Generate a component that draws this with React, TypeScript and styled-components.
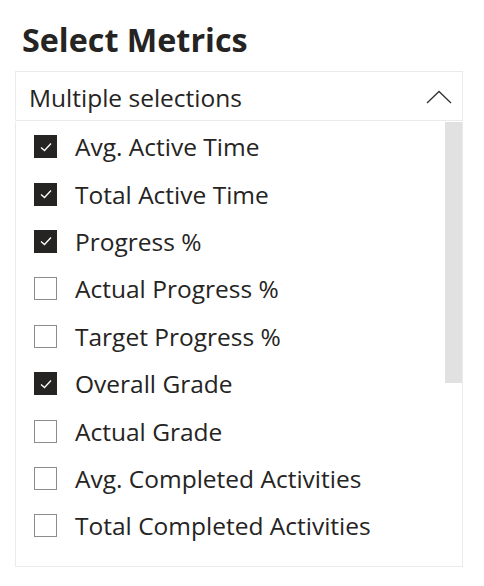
import React, { useState } from 'react';
import styled, { createGlobalStyle } from 'styled-components';

const GlobalStyle = createGlobalStyle`
  html, body {
    margin: 0;
    padding: 0;
    background: #ffffff;
  }
  body {
    font-family: "Open Sans", "DejaVu Sans", sans-serif;
    color: #252423;
  }
`;

const Wrapper = styled.div`
  width: 484px;
  height: 586px;
  padding: 0 21px 0 15px;
  box-sizing: border-box;
  display: flex;
  flex-direction: column;
`;

const Title = styled.h2`
  margin: 0 0 0 7px;
  height: 71px;
  padding-top: 19px;
  box-sizing: border-box;
  font-size: 32.3px;
  line-height: 40px;
  font-weight: 700;
  color: #252423;
`;

const Header = styled.div`
  height: 50px;
  border: 1px solid #ebebeb;
  box-sizing: border-box;
  display: flex;
  align-items: center;
  justify-content: space-between;
  padding: 2px 10px 0 13px;
`;

const HeaderText = styled.span`
  font-size: 24.5px;
  color: #252423;
`;

const Panel = styled.div`
  margin-top: 1px;
  height: 445px;
  border: 1px solid #ebebeb;
  border-top: none;
  box-sizing: border-box;
  display: flex;
`;

const List = styled.ul`
  flex: 1;
  margin: 0;
  padding: 1px 0 0 18px;
  list-style: none;
`;

const Row = styled.li`
  height: 47.4px;
  display: flex;
  align-items: center;
  gap: 18px;
  cursor: pointer;
  font-size: 24.5px;
  white-space: nowrap;
`;

const Box = styled.span<{ $checked: boolean }>`
  width: 23px;
  height: 23px;
  box-sizing: border-box;
  flex: none;
  display: flex;
  align-items: center;
  justify-content: center;
  background: ${({ $checked }) => ($checked ? '#252423' : '#ffffff')};
  border: 1.5px solid ${({ $checked }) => ($checked ? '#252423' : '#8c8c8c')};
`;

const ScrollTrack = styled.div`
  width: 17px;
  flex: none;
`;

const Thumb = styled.div`
  height: 261px;
  background: #e1e1e1;
`;

interface Metric {
  label: string;
  checked: boolean;
}

const initial: Metric[] = [
  { label: 'Avg. Active Time', checked: true },
  { label: 'Total Active Time', checked: true },
  { label: 'Progress %', checked: true },
  { label: 'Actual Progress %', checked: false },
  { label: 'Target Progress %', checked: false },
  { label: 'Overall Grade', checked: true },
  { label: 'Actual Grade', checked: false },
  { label: 'Avg. Completed Activities', checked: false },
  { label: 'Total Completed Activities', checked: false },
];

const App: React.FC = () => {
  const [metrics, setMetrics] = useState<Metric[]>(initial);

  const toggle = (index: number) => {
    setMetrics(metrics.map((m, i) => (i === index ? { ...m, checked: !m.checked } : m)));
  };

  return (
    <Wrapper>
      <GlobalStyle />
      <Title>Select Metrics</Title>
      <Header>
        <HeaderText>Multiple selections</HeaderText>
        <svg width="26" height="14" viewBox="0 0 26 14">
          <polyline points="1,13 13,1.5 25,13" fill="none" stroke="#333" strokeWidth="1.3" />
        </svg>
      </Header>
      <Panel>
        <List>
          {metrics.map((m, idx) => (
            <Row key={m.label} onClick={() => toggle(idx)}>
              <Box $checked={m.checked}>
                {m.checked && (
                  <svg width="12" height="10" viewBox="0 0 12 10">
                    <polyline points="1,5.5 4.5,8.5 11,1.5" fill="none" stroke="#fff" strokeWidth="1.3" />
                  </svg>
                )}
              </Box>
              {m.label}
            </Row>
          ))}
        </List>
        <ScrollTrack>
          <Thumb />
        </ScrollTrack>
      </Panel>
    </Wrapper>
  );
};

export default App;
